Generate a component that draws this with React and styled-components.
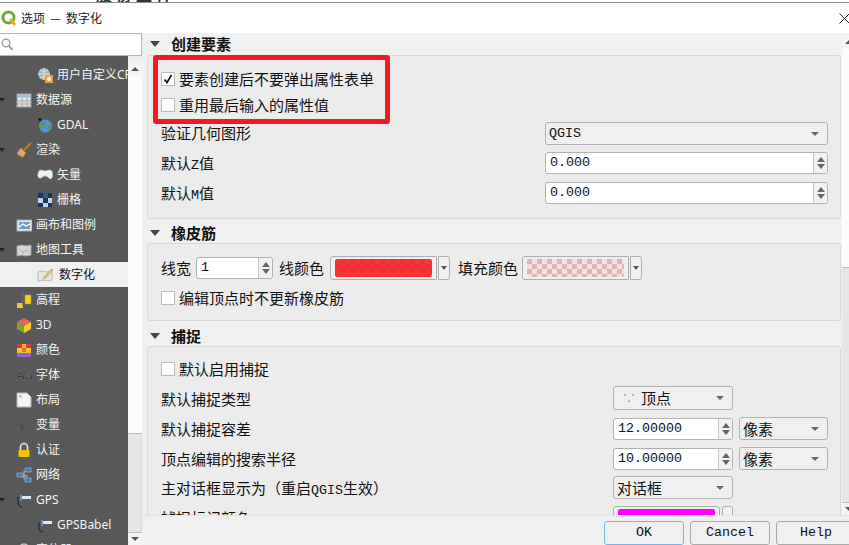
import React from "react";
import styled, { createGlobalStyle } from "styled-components";

const Global = createGlobalStyle`
  html, body { margin: 0; padding: 0; background: #f0f0f0; }
  * { box-sizing: border-box; }
`;

const CJK = `"Noto Sans CJK SC", "Noto Sans", sans-serif`;
const MONO = `"Liberation Mono", monospace`;
const DITHER = `repeating-linear-gradient(0deg, #f3f3f3 0 1px, #ececec 1px 2px)`;

const Frame = styled.div`
  width: 849px; height: 545px; overflow: hidden; display: flex; flex-direction: column;
  background: #f0f0f0; color: #111; font: 15px/20px ${CJK};
`;
const Backdrop = styled.div`
  height: 3px; flex: none; overflow: hidden; display: flex; align-items: flex-end;
  padding-left: 96px; background: #fff; border-bottom: 1px solid #8c8c8c;
  font: 700 16px/16px ${CJK}; letter-spacing: 4px; color: #333;
`;
const TitleBar = styled.div`
  height: 30px; flex: none; background: #fff; display: flex; align-items: center;
  padding: 0 0 0 1px; font: 12px/16px ${CJK}; color: #222;
`;
const TitleText = styled.span` margin-left: 4px; flex: 1; word-spacing: 2.5px; `;
const Close = styled.svg` width: 11px; height: 11px; margin-right: -1px; flex: none; `;
const Body = styled.div` flex: 1; min-height: 0; display: flex; `;
const Sidebar = styled.div` width: 142px; flex: none; display: flex; flex-direction: column; `;
const SearchBox = styled.div`
  height: 23px; flex: none; background: #fff; border: 1px solid #b5b5b5; border-left: 0;
  display: flex; align-items: center; padding-left: 1px;
`;
const TreeWrap = styled.div` flex: 1; min-height: 0; display: flex; `;
const Tree = styled.div`
  width: 128px; flex: none; background: #595959; padding-top: 6px; overflow: hidden;
`;
const Row = styled.div`
  height: 25px; display: flex; align-items: center; white-space: nowrap;
  background: ${p => (p.$selected ? "#f0f0f0" : "transparent")};
  color: ${p => (p.$selected ? "#111" : "#f4f4f4")};
  font: 12px/16px "Noto Sans", ${CJK};
`;
const Twist = styled.span`
  width: 16px; flex: none; display: flex; align-items: center;
  &::before {
    content: ""; display: ${p => (p.$open ? "block" : "none")}; margin-left: -1px;
    border: 3.5px solid transparent; border-top: 4px solid #222; border-bottom: 0;
  }
`;
const Glyph = styled.svg`
  width: 16px; height: 16px; flex: none;
  margin-left: ${p => (p.$level === 2 ? "21px" : "0")};
  margin-right: ${p => (p.$selected ? "6px" : "4px")};
`;
const Bar = styled.div`
  width: 14px; flex: none; margin-top: 6px; display: flex; flex-direction: column;
`;
const BarEnd = styled.div`
  height: ${p => p.$h}px; flex: none; background: #f4f4f4; display: flex; align-items: center; justify-content: center;
  &::before {
    content: ""; border: 4px solid transparent;
    ${p => (p.$down ? "border-top: 4px solid #555; border-bottom: 0;" : "border-bottom: 4px solid #555; border-top: 0;")}
  }
`;
const Thumb = styled.div` height: ${p => p.$h}px; flex: none; background: #fbfbfb; `;
const Trough = styled.div`
  flex: 1; background: #e6e6e6; border-top: 1px solid #bdbdbd; border-bottom: 1px solid #bdbdbd;
  border-right: 1px dotted #cfcfcf;
`;
const Main = styled.div` flex: 1; min-width: 0; display: flex; flex-direction: column; overflow: hidden; `;
const Workspace = styled.div` flex: 1; min-height: 0; display: flex; `;
const Scroll = styled.div` width: 700px; flex: none; overflow: hidden; padding: 0 1px 0 5px; `;
const SideBar2 = styled(Bar)` margin-top: 2px; `;
const Head = styled.div`
  height: 22px; display: flex; align-items: center; font-weight: 700; color: #111;
  margin-top: ${p => p.$top || 0}px;
  padding-top: ${p => (p.$nudge ? 2 : 0)}px;
  &::before {
    content: ""; margin: 0 11px 0 3px; border: 5.5px solid transparent;
    border-top: 6px solid #444; border-bottom: 0;
  }
`;
const Group = styled.div`
  position: relative; background: #ececec; border: 1px solid #d8d8d8; border-radius: 3px;
  padding: ${p => p.$pad}; display: flex; flex-direction: column;
  min-height: ${p => p.$min || 0}px;
`;
const RedMark = styled.div`
  position: absolute; left: 5px; top: -1px; width: 237px; height: 69px;
  border: 5.5px solid #ee1c25; border-radius: 3px; pointer-events: none;
`;
const CheckRow = styled.label`
  display: flex; align-items: center; height: 14px; gap: 4px;
  margin-bottom: ${p => p.$mb || 0}px; white-space: nowrap;
`;
const Box = styled.span`
  width: 14px; height: 14px; flex: none; background: #fff; border: 1px solid #bcbcbc;
  display: flex; align-items: center; justify-content: center;
`;
const FormRow = styled.div`
  display: grid; grid-template-columns: ${p => p.$cols}; column-gap: 6px; align-items: center;
  height: ${p => p.$h}px; margin-top: ${p => p.$mt || 0}px; white-space: nowrap;
`;
const Label = styled.span` position: relative; top: ${p => p.$dy || 0}px; `;
const Lat = styled.span` font: 13.33px/1 ${MONO}; `;
const Combo = styled.div`
  height: ${p => p.$h || 23}px; background: ${DITHER}; border: 1px solid #b2b2b2; border-radius: 3px;
  display: flex; align-items: center; padding-left: 3px; font: 15px/20px ${CJK};
  &::after {
    content: ""; margin-left: auto; margin-right: 8px; border: 4px solid transparent;
    border-top: 4px solid #666; border-bottom: 0;
  }
`;
const ComboText = styled.span` font: 13.33px/20px ${MONO}; `;
const Dots = styled.svg` width: 16px; height: 16px; margin: 0 4px 0 4px; flex: none; `;
const Spin = styled.div`
  height: 22px; width: ${p => (p.$w ? `${p.$w}px` : "auto")}; background: #fff; border: 1px solid #b2b2b2; border-radius: 3px;
  display: flex; align-items: stretch; font: 13.33px/20px ${MONO}; flex: none;
`;
const SpinText = styled.span` flex: 1; padding-left: 4px; `;
const SpinBtn = styled.span`
  width: 14px; flex: none; background: #f2f2f2; border-left: 1px solid #c4c4c4; border-radius: 0 3px 3px 0;
  display: flex; flex-direction: column; align-items: center; justify-content: center; gap: 2px;
  &::before { content: ""; border: 4px solid transparent; border-bottom: 5px solid #666; border-top: 0; }
  &::after { content: ""; border: 4px solid transparent; border-top: 5px solid #666; border-bottom: 0; }
`;
const ColorRow = styled.div`
  display: flex; align-items: center; height: 24px; margin-bottom: 11px; white-space: nowrap;
`;
const Gap = styled.span` width: ${p => p.$w}px; flex: none; `;
const ColorBtn = styled.div`
  width: 107px; height: 24px; flex: none; background: #f0f0f0; border: 1px solid #aeaeae; border-radius: 3px 0 0 3px;
  padding: 2px 4px;
`;
const Swatch = styled.div`
  height: 18px; border-radius: 2px;
  background: repeating-conic-gradient(${p => p.$a} 0 25%, ${p => p.$b} 0 50%) 0 0 / 10px 10px;
`;
const ColorDrop = styled.div`
  width: 12px; height: 24px; flex: none; margin-left: 1px; background: #f2f2f2; border: 1px solid #aeaeae; border-radius: 0 3px 3px 0;
  display: flex; align-items: center; justify-content: center;
  &::before { content: ""; border: 3.5px solid transparent; border-top: 4px solid #555; border-bottom: 0; }
`;
const MagentaRow = styled.div` display: flex; gap: 2px; width: 120px; `;
const MagentaBtn = styled.div`
  flex: 1; height: 24px; background: #f0f0f0; border: 1px solid #aeaeae; border-radius: 3px; padding: 2px 4px;
`;
const Magenta = styled.div` height: 18px; background: #ff00ff; border-radius: 2px; `;
const MagentaDrop = styled.div` width: 11px; height: 24px; flex: none; background: #f2f2f2; border: 1px solid #aeaeae; border-radius: 3px; `;
const ButtonBar = styled.div`
  height: 30px; flex: none; background: #f0f0f0; border-top: 1px solid #e4e4e4; display: flex; gap: 6px;
  padding: 5px 0 0 462px;
`;
const Btn = styled.div`
  width: ${p => p.$w}px; height: 24px; flex: none; border: 1px solid ${p => (p.$focus ? "#78b4ea" : "#ababab")}; border-radius: 3px;
  background: ${DITHER}; font: 13.33px/22px ${MONO}; text-align: center; color: #111;
`;

const I = {
  crs: <><circle cx="7" cy="7" r="6" fill="#a9b3ba" /><path d="M1 7h12M7 1v12M3 3c3 2 5 2 8 0M3 11c3-2 5-2 8 0" stroke="#e4e8ea" fill="none" /><rect x="8" y="8" width="8" height="8" fill="#e8a33a" /><circle cx="12" cy="12" r="2" fill="#fff" /></>,
  table: <><rect x="1" y="2" width="14" height="13" fill="#e6e6e6" stroke="#9a9a9a" /><rect x="1.5" y="2.5" width="13" height="3" fill="#9cc0e4" /><path d="M1 9h14M1 12h14M6 6v9M11 6v9" stroke="#a8a8a8" /></>,
  globe: <><circle cx="8.5" cy="9" r="6.5" fill="#4e93d6" /><path d="M5 5c2 1 4 1 4 3s-3 2-3 4-3-1-3-3zM11 9c2-1 3 0 3 1l-2 3c-2 0-2-3-1-4z" fill="#5a9a4a" /><circle cx="3" cy="2.5" r="1.5" fill="#111" /></>,
  brush: <><path d="M15 1 8 8" stroke="#b9812e" strokeWidth="2" /><path d="M5 6l5 5-3 4H5l-1-2-1 1-2-3z" fill="#e3a36a" stroke="#b97f49" strokeWidth=".6" /></>,
  vector: <path d="M2 4c3-2 4 0 6 0s4-2 7 0c1 3 1 6-1 8-2 0-3-3-6-3s-3 3-6 2C0 9 1 6 2 4z" fill="#eef3f7" stroke="#b8c8d4" strokeWidth=".7" />,
  raster: <><rect x="1" y="1" width="14" height="14" fill="#c2d6ea" /><path d="M1 1h5v5H1zM11 1h4v5h-4zM6 6h5v5H6zM1 11h5v4H1zM11 11h4v4h-4z" fill="#1e3658" /><path d="M6 1h5v5H6z" fill="#385a86" /></>,
  canvas: <><rect x="1" y="3" width="15" height="11" fill="#e8e8e8" stroke="#aaa" /><path d="M3 5h11v7H3z" fill="#6d9ed0" /><path d="M3 10l4-3 3 2 4-2" stroke="#fff" strokeWidth="1.2" fill="none" /></>,
  map: <><path d="M1 4l5-1 4 1 5-1v10l-5 1-4-1-5 1z" fill="#d6d6d6" stroke="#a6a6a6" /><path d="M4 7l3 4 3-3 3 2" stroke="#8a8a8a" fill="none" strokeDasharray="1.5 1" /></>,
  digit: <><path d="M1 5l5-1 4 1 5-1v9l-5 1-4-1-5 1z" fill="#e6e6e6" stroke="#bdbdbd" /><path d="M7 10l7-8 2 1-7 8-3 1z" fill="#e4c27a" stroke="#a88c54" strokeWidth=".5" /></>,
  elev: <><path d="M9 3h6v9H9z" fill="#f3cf22" stroke="#bf9f12" strokeWidth=".5" /><path d="M1 11h6v5H1z" fill="#f3cf22" /><path d="M7 14V2M5 4l2-3 2 3" stroke="#666" strokeWidth="1.4" fill="none" /></>,
  cube: <><path d="M8 1l7 4-7 4-7-4z" fill="#e8625f" /><path d="M1 5l7 4v7l-7-4z" fill="#75a82c" /><path d="M15 5L8 9v7l7-4z" fill="#f0ce34" /></>,
  color: <><rect x="1" y="2" width="14" height="13" fill="#f5c030" /><path d="M1 2h5v4H1zM10 2h5v4h-5z" fill="#e03a3a" /><path d="M6 6h4v4H6z" fill="#ee6f3a" /><path d="M1 11h14v4H1z" fill="#9060d0" /></>,
  font: <text x="0" y="13" fontFamily="Liberation Sans" fontSize="13" fontWeight="700" fill="#3a3a3a" stroke="#8a8a8a" strokeWidth=".3">Aa</text>,
  layout: <><path d="M1 1h10l4 4v10H1z" fill="#f4f4f4" stroke="#b4b4b4" /><path d="M3 3h3v3H3z" fill="#c4c4c4" /></>,
  vars: <text x="4" y="13" fontFamily="Liberation Serif" fontSize="15" fill="#4b3a72">ε</text>,
  lock: <><path d="M4.5 8V5a3.5 3.5 0 0 1 7 0v3" stroke="#e8e8e8" strokeWidth="1.6" fill="none" /><rect x="2.5" y="8" width="11" height="7" rx="1" fill="#f1c40f" /></>,
  net: <><path d="M8 4v8M4 9h8" stroke="#bdbdbd" /><rect x="9" y="1" width="6" height="4" fill="#3f79c4" stroke="#ccc" strokeWidth=".5" /><rect x="1" y="6" width="6" height="4" fill="#3f79c4" stroke="#ccc" strokeWidth=".5" /><rect x="9" y="11" width="6" height="4" fill="#3f79c4" stroke="#ccc" strokeWidth=".5" /></>,
  gps: <><path d="M4 3h2v6H4z" fill="#5a8fd0" /><path d="M6 4h9v3H6z" fill="#dfe8f2" /><path d="M2 5v5c0 3 2 5 4 5" stroke="#333" strokeWidth="1.6" fill="none" /></>,
  find: <><circle cx="8" cy="7" r="5" fill="none" stroke="#c4c4c4" strokeWidth="1.6" /><path d="M11 11l4 4" stroke="#c4c4c4" strokeWidth="2" /></>,
};

const items = [
  ["crs", "用户自定义CRS", 2],
  ["table", "数据源", 1, true],
  ["globe", "GDAL", 2],
  ["brush", "渲染", 1, true],
  ["vector", "矢量", 2],
  ["raster", "栅格", 2],
  ["canvas", "画布和图例", 1],
  ["map", "地图工具", 1, true],
  ["digit", "数字化", 2, false, true],
  ["elev", "高程", 1],
  ["cube", "3D", 1],
  ["color", "颜色", 1],
  ["font", "字体", 1],
  ["layout", "布局", 1],
  ["vars", "变量", 1],
  ["lock", "认证", 1],
  ["net", "网络", 1],
  ["gps", "GPS", 1, true],
  ["gps", "GPSBabel", 2],
  ["find", "定位器", 1],
];

const Check = ({ on }) => (
  <Box>
    {on && (
      <svg width="10" height="10" viewBox="0 0 10 10">
        <path d="M1.5 5.5 4 8.5 8.5 1" stroke="#111" strokeWidth="1.7" fill="none" />
      </svg>
    )}
  </Box>
);

export default function App() {
  return (
    <Frame>
      <Global />
      <Backdrop>股份上样</Backdrop>
      <TitleBar>
        <svg width="16" height="16" viewBox="0 0 16 16">
          <circle cx="7.5" cy="7.5" r="5.5" fill="none" stroke="#73a93c" strokeWidth="3" />
          <path d="M9 9l5 6" stroke="#e6b422" strokeWidth="3" />
        </svg>
        <TitleText>选项 — 数字化</TitleText>
        <Close viewBox="0 0 11 11"><path d="M.5.5l10 10M10.5.5l-10 10" stroke="#222" /></Close>
      </TitleBar>
      <Body>
        <Sidebar>
          <SearchBox>
            <svg width="12" height="13" viewBox="0 0 12 13">
              <circle cx="5" cy="5" r="3.8" fill="none" stroke="#9a9a9a" strokeWidth="1.3" />
              <path d="M8 8l3.5 4" stroke="#8a8a8a" strokeWidth="1.6" />
            </svg>
          </SearchBox>
          <TreeWrap>
            <Tree>
              {items.map(([icon, label, level, open, selected]) => (
                <Row key={label} $selected={selected}>
                  <Twist $open={open} />
                  <Glyph viewBox="0 0 16 16" $level={level} $selected={selected}>{I[icon]}</Glyph>
                  {label}
                </Row>
              ))}
            </Tree>
            <Bar>
              <BarEnd $h={14} />
              <Thumb $h={357} />
              <Trough />
              <BarEnd $h={12} $down />
            </Bar>
          </TreeWrap>
        </Sidebar>
        <Main>
          <Workspace>
            <Scroll>
              <Head>创建要素</Head>
              <Group $pad="16px 12px 14px 13px">
                <RedMark />
                <CheckRow $mb={12}><Check on />要素创建后不要弹出属性表单</CheckRow>
                <CheckRow><Check />重用最后输入的属性值</CheckRow>
                <FormRow $cols="1fr 283px" $h={23} $mt={10}>
                  <Label $dy={-1}>验证几何图形</Label>
                  <Combo><ComboText>QGIS</ComboText></Combo>
                </FormRow>
                <FormRow $cols="1fr 283px" $h={22} $mt={7}>
                  <span>默认<Lat>Z</Lat>值</span>
                  <Spin><SpinText>0.000</SpinText><SpinBtn /></Spin>
                </FormRow>
                <FormRow $cols="1fr 283px" $h={22} $mt={8}>
                  <span>默认<Lat>M</Lat>值</span>
                  <Spin><SpinText>0.000</SpinText><SpinBtn /></Spin>
                </FormRow>
              </Group>

              <Head $top={2} $nudge>橡皮筋</Head>
              <Group $pad="12px 12px 15px 13px">
                <ColorRow>
                  <span>线宽</span>
                  <Gap $w={5} />
                  <Spin $w={77}><SpinText>1</SpinText><SpinBtn /></Spin>
                  <Gap $w={6} />
                  <span>线颜色</span>
                  <Gap $w={6} />
                  <ColorBtn><Swatch $a="#ff2a2a" $b="#ec3a3a" /></ColorBtn>
                  <ColorDrop />
                  <Gap $w={8} />
                  <span>填充颜色</span>
                  <Gap $w={4} />
                  <ColorBtn><Swatch $a="#f8dfdf" $b="#dcb6b6" /></ColorBtn>
                  <ColorDrop />
                </ColorRow>
                <CheckRow><Check />编辑顶点时不更新橡皮筋</CheckRow>
              </Group>

              <Head $top={3} $nudge>捕捉</Head>
              <Group $pad="15px 12px 0 13px" $min={180}>
                <CheckRow><Check />默认启用捕捉</CheckRow>
                <FormRow $cols="1fr 120px 89px" $h={24} $mt={10}>
                  <Label $dy={1}>默认捕捉类型</Label>
                  <Combo $h={24}>
                    <Dots viewBox="0 0 16 16"><path d="M3 4h2v2H3zM11 4h2v2h-2zM7 10h2v2H7z" fill="#b5b5b5" /></Dots>
                    顶点
                  </Combo>
                  <span />
                </FormRow>
                <FormRow $cols="1fr 120px 89px" $h={23} $mt={7}>
                  <span>默认捕捉容差</span>
                  <Spin><SpinText>12.00000</SpinText><SpinBtn /></Spin>
                  <Combo>像素</Combo>
                </FormRow>
                <FormRow $cols="1fr 120px 89px" $h={23} $mt={7}>
                  <span>顶点编辑的搜索半径</span>
                  <Spin><SpinText>10.00000</SpinText><SpinBtn /></Spin>
                  <Combo>像素</Combo>
                </FormRow>
                <FormRow $cols="1fr 120px 89px" $h={23} $mt={6}>
                  <span>主对话框显示为（重启<Lat>QGIS</Lat>生效）</span>
                  <Combo>对话框</Combo>
                  <span />
                </FormRow>
                <FormRow $cols="1fr 120px 89px" $h={24} $mt={7}>
                  <span>捕捉标记颜色</span>
                  <MagentaRow><MagentaBtn><Magenta /></MagentaBtn><MagentaDrop /></MagentaRow>
                  <span />
                </FormRow>
              </Group>
            </Scroll>
            <SideBar2>
              <BarEnd $h={14} />
              <Thumb $h={218} />
              <Trough />
              <BarEnd $h={12} $down />
            </SideBar2>
          </Workspace>
          <ButtonBar>
            <Btn $w={80} $focus>OK</Btn>
            <Btn $w={80}>Cancel</Btn>
            <Btn $w={80}>Help</Btn>
          </ButtonBar>
        </Main>
      </Body>
    </Frame>
  );
}
